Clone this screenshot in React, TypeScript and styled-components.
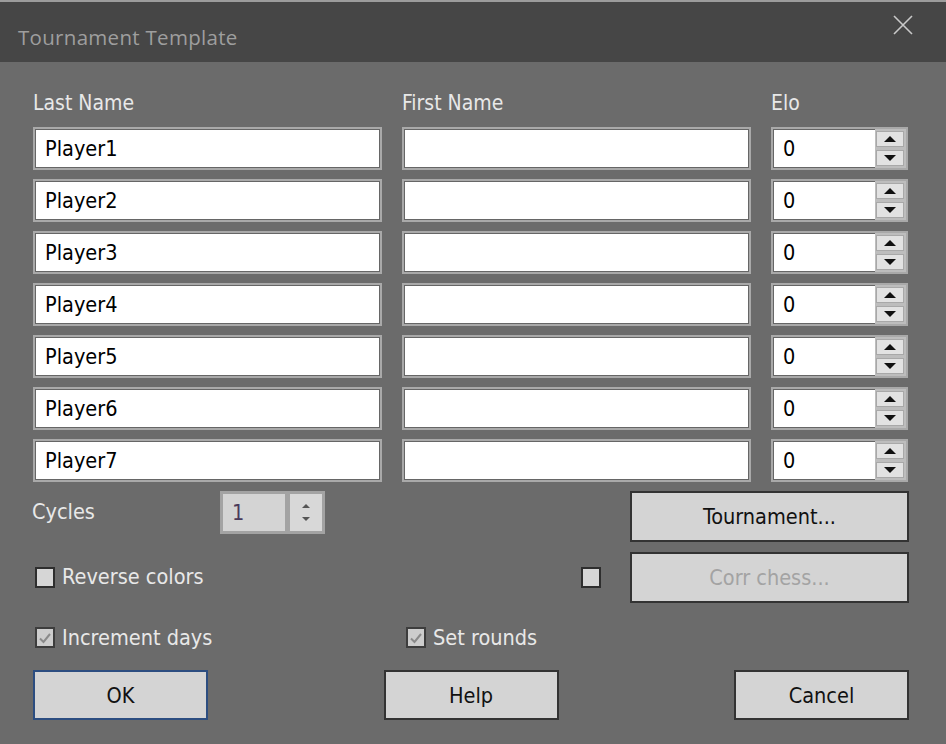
import * as React from 'react';
import styled, { createGlobalStyle } from 'styled-components';

const players = ['Player1', 'Player2', 'Player3', 'Player4', 'Player5', 'Player6', 'Player7'];

export default function App() {
  return (
    <>
      <GlobalStyle />
      <Window>
        <TitleBar>
          <Title>Tournament Template</Title>
          <CloseButton aria-label="close">
            <svg width="20" height="20" viewBox="0 0 20 20">
              <path d="M1 1 L19 19 M19 1 L1 19" stroke="#c9c9c9" strokeWidth="1.6" fill="none" />
            </svg>
          </CloseButton>
        </TitleBar>

        <Body>
          <PlayerGrid>
            <HeaderLabel>Last Name</HeaderLabel>
            <HeaderLabel>First Name</HeaderLabel>
            <HeaderLabel>Elo</HeaderLabel>
            {players.map((p) => (
              <React.Fragment key={p}>
                <TextBox defaultValue={p} />
                <TextBox defaultValue="" />
                <EloBox>
                  <EloInput defaultValue="0" />
                  <SpinColumn>
                    <SpinButton>
                      <Arrow up />
                    </SpinButton>
                    <SpinButton>
                      <Arrow />
                    </SpinButton>
                  </SpinColumn>
                </EloBox>
              </React.Fragment>
            ))}
          </PlayerGrid>

          <RowCycles>
            <FieldLabel>Cycles</FieldLabel>
            <CyclesBox>
              <CyclesValue>1</CyclesValue>
              <CyclesSpin>
                <SmallArrow up />
                <SmallArrow />
              </CyclesSpin>
            </CyclesBox>
            <DialogButton $wide>Tournament...</DialogButton>
          </RowCycles>

          <RowReverse>
            <CheckItem>
              <CheckBox />
              <CheckText>Reverse colors</CheckText>
            </CheckItem>
            <RightGroup>
              <CheckBox />
              <DialogButton $wide disabled>
                Corr chess...
              </DialogButton>
            </RightGroup>
          </RowReverse>

          <RowChecks>
            <CheckItem $width={369}>
              <CheckBox $checked>
                <Tick />
              </CheckBox>
              <CheckText>Increment days</CheckText>
            </CheckItem>
            <CheckItem>
              <CheckBox $checked>
                <Tick />
              </CheckBox>
              <CheckText>Set rounds</CheckText>
            </CheckItem>
          </RowChecks>

          <RowButtons>
            <DialogButton $default>OK</DialogButton>
            <DialogButton>Help</DialogButton>
            <DialogButton>Cancel</DialogButton>
          </RowButtons>
        </Body>
      </Window>
    </>
  );
}

function Tick() {
  return (
    <svg width="14" height="14" viewBox="0 0 14 14">
      <path d="M2 7.5 L5.5 11 L12 3" stroke="#8a8a8a" strokeWidth="2" fill="none" />
    </svg>
  );
}

const GlobalStyle = createGlobalStyle`
  html, body {
    margin: 0;
    padding: 0;
    background: #6b6b6b;
  }
  #root {
    width: 946px;
    height: 744px;
  }
`;

const Window = styled.div`
  width: 946px;
  height: 744px;
  background: #6b6b6b;
  display: flex;
  flex-direction: column;
  overflow: hidden;
  font-family: 'DejaVu Sans Condensed', 'Liberation Sans', sans-serif;
`;

const TitleBar = styled.div`
  height: 60px;
  border-top: 2px solid #9c9c9c;
  background: #464646;
  display: flex;
  align-items: flex-start;
  justify-content: space-between;
  padding: 0 33px 0 18px;
`;

const Title = styled.div`
  margin-top: 23px;
  font-family: 'Open Sans', 'Noto Sans', sans-serif;
  font-size: 20.5px;
  line-height: 24px;
  color: #9e9e9e;
  letter-spacing: 0.3px;
`;

const CloseButton = styled.div`
  margin-top: 13px;
  width: 20px;
  height: 20px;
`;

const Body = styled.div`
  flex: 1;
  padding: 27px 37px 0 33px;
  display: flex;
  flex-direction: column;
`;

const PlayerGrid = styled.div`
  display: grid;
  grid-template-columns: 349px 349px 137px;
  grid-auto-rows: 43px;
  grid-template-rows: 29px;
  column-gap: 20px;
  row-gap: 9px;
`;

const HeaderLabel = styled.div`
  font-size: 21px;
  line-height: 29px;
  color: #e8e8e8;
`;

const TextBox = styled.input`
  box-sizing: border-box;
  width: 100%;
  height: 43px;
  margin: 0;
  border: 2px solid #a9a9a9;
  box-shadow: inset 0 0 0 1px #666;
  background: #fff;
  padding: 0 0 0 10px;
  font-family: inherit;
  font-size: 21.5px;
  color: #000;
  outline: none;
`;

const EloBox = styled.div`
  box-sizing: border-box;
  display: flex;
  height: 43px;
  border: 2px solid #a9a9a9;
  background: #fff;
`;

const EloInput = styled.input`
  box-sizing: border-box;
  width: 102px;
  height: 100%;
  border: none;
  box-shadow: inset 1px 1px 0 #666, inset 0 -1px 0 #666;
  padding: 0 0 0 10px;
  margin: 0;
  font-family: inherit;
  font-size: 21.5px;
  color: #000;
  outline: none;
`;

const SpinColumn = styled.div`
  flex: 1;
  background: #bdbdbd;
  display: flex;
  flex-direction: column;
  gap: 3px;
  padding: 2px 2px 2px 1px;
`;

const SpinButton = styled.div`
  flex: 1;
  background: #e2e2e2;
  border: 1px solid #a8a8a8;
  display: flex;
  align-items: center;
  justify-content: center;
`;

const Arrow = styled.div<{ up?: boolean }>`
  width: 0;
  height: 0;
  border-left: 6px solid transparent;
  border-right: 6px solid transparent;
  ${(p) => (p.up ? 'border-bottom: 6px solid #111;' : 'border-top: 6px solid #111;')}
`;

const RowCycles = styled.div`
  display: flex;
  align-items: flex-start;
  height: 51px;
  margin-top: 9px;
`;

const FieldLabel = styled.div`
  width: 187px;
  margin-top: 6px;
  margin-left: -1px;
  font-size: 21.5px;
  line-height: 29px;
  color: #e8e8e8;
`;

const CyclesBox = styled.div`
  box-sizing: border-box;
  width: 105px;
  height: 43px;
  margin-left: 1px;
  background: #a3a3a3;
  padding: 3px;
  display: flex;
  gap: 5px;
`;

const CyclesValue = styled.div`
  width: 62px;
  background: #d4d4d4;
  padding-left: 9px;
  box-sizing: border-box;
  font-size: 21.5px;
  line-height: 37px;
  color: #4a3a5a;
`;

const CyclesSpin = styled.div`
  flex: 1;
  background: #d8d8d8;
  display: flex;
  flex-direction: column;
  align-items: center;
  justify-content: center;
  gap: 9px;
`;

const SmallArrow = styled.div<{ up?: boolean }>`
  width: 0;
  height: 0;
  border-left: 4px solid transparent;
  border-right: 4px solid transparent;
  ${(p) => (p.up ? 'border-bottom: 4px solid #555;' : 'border-top: 4px solid #555;')}
`;

const DialogButton = styled.button<{ $wide?: boolean; $default?: boolean }>`
  box-sizing: border-box;
  width: ${(p) => (p.$wide ? '279px' : '175px')};
  height: ${(p) => (p.$wide ? '51px' : '50px')};
  margin: 0 0 0 ${(p) => (p.$wide ? 'auto' : '0')};
  background: #d4d4d4;
  border: 2px solid ${(p) => (p.$default ? '#2c4d80' : '#333')};
  font-family: inherit;
  font-size: 21.5px;
  color: #111;
  padding: 0;

  &:disabled {
    color: #a3a3a3;
  }
`;

const RowReverse = styled.div`
  display: flex;
  align-items: center;
  height: 50px;
  margin-top: 10px;
`;

const RightGroup = styled.div`
  margin-left: auto;
  display: flex;
  align-items: center;
  gap: 29px;
`;

const CheckItem = styled.div<{ $width?: number }>`
  display: flex;
  align-items: center;
  gap: 7px;
  padding-left: 2px;
  width: ${(p) => (p.$width ? `${p.$width}px` : 'auto')};
`;

const CheckBox = styled.div<{ $checked?: boolean }>`
  box-sizing: border-box;
  width: 20px;
  height: 21px;
  border: 2px solid ${(p) => (p.$checked ? '#3d3d3d' : '#2e2e2e')};
  background: ${(p) => (p.$checked ? '#cdcdcd' : '#d6d6d6')};
  display: flex;
  align-items: center;
  justify-content: center;
`;

const CheckText = styled.span`
  font-size: 21.5px;
  line-height: 26px;
  color: #e8e8e8;
`;

const RowChecks = styled.div`
  display: flex;
  align-items: center;
  height: 21px;
  margin-top: 25px;
`;

const RowButtons = styled.div`
  display: flex;
  justify-content: space-between;
  margin-top: 22px;
`;
